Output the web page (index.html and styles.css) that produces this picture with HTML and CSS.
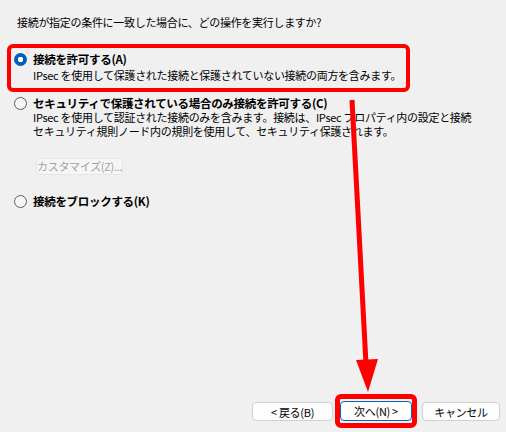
FILE: index.html
```html
<!DOCTYPE html>
<html lang="ja">
<head>
    <meta charset="UTF-8">
    <title>接続の操作</title>
    <link rel="stylesheet" href="styles.css">
</head>
<body>
    <div class="page">
        <div class="question">接続が指定の条件に一致した場合に、どの操作を実行しますか?</div>

        <div class="choice mark">
            <div class="choice-head">
                <span class="radio checked"></span>
                <span class="label">接続を許可する(A)</span>
            </div>
            <div class="desc">IPsec を使用して保護された接続と保護されていない接続の両方を含みます。</div>
        </div>

        <div class="choice second">
            <div class="choice-head short">
                <span class="radio"></span>
                <span class="label">セキュリティで保護されている場合のみ接続を許可する(C)</span>
            </div>
            <div class="desc tight">IPsec を使用して認証された接続のみを含みます。接続は、IPsec プロパティ内の設定と接続<br>セキュリティ規則ノード内の規則を使用して、セキュリティ保護されます。</div>
        </div>

        <button class="btn customize" disabled>カスタマイズ(Z)...</button>

        <div class="choice third">
            <div class="choice-head">
                <span class="radio"></span>
                <span class="label">接続をブロックする(K)</span>
            </div>
        </div>

        <div class="actions">
            <button class="btn back">&lt; 戻る(B)</button>
            <div class="mark-btn">
                <button class="btn next">次へ(N) &gt;</button>
            </div>
            <button class="btn cancel">キャンセル</button>
        </div>

        <svg class="arrow" width="506" height="432" viewBox="0 0 506 432">
            <line x1="352" y1="100" x2="366" y2="364" stroke="#ff0000" stroke-width="5" />
            <polygon points="356,360 378,359 368,392" fill="#ff0000" />
        </svg>
    </div>
</body>
</html>
```

FILE: styles.css
```css
body {
    margin: 0;
    padding: 0;
    background: #f0f0f0;
    font-family: "Noto Sans CJK JP", "Noto Sans", sans-serif;
    font-size: 11px;
    letter-spacing: -0.3px;
    color: #000;
    white-space: nowrap;
}

.page {
    position: relative;
    width: 506px;
    height: 432px;
    display: flex;
    flex-direction: column;
    box-sizing: border-box;
    padding-bottom: 4px;
    overflow: hidden;
}

.question {
    padding: 14px 0 0 17px;
    line-height: 16px;
}

.choice-head {
    display: flex;
    align-items: center;
    line-height: 16px;
}

.choice-head.short {
    line-height: 14px;
    margin-top: 1px;
}

.label {
    font-weight: 700;
    font-size: 11.5px;
    margin-left: 6px;
}

.desc {
    line-height: 16px;
    padding-left: 19px;
}

.desc.tight {
    line-height: 14px;
}

.choice.mark {
    margin: 14px 0 0 7px;
    width: 403px;
    height: 48px;
    box-sizing: border-box;
    border: 4px solid #ff0000;
    border-radius: 6px;
    padding: 3px 0 0 3px;
}

.choice.second {
    margin: 3px 0 0 14px;
}

.choice.third {
    margin: 18px 0 0 14px;
}

.radio {
    width: 13px;
    height: 13px;
    box-sizing: border-box;
    border-radius: 50%;
    border: 1px solid #5d5d5d;
    background: #f6f6f6;
    flex: none;
}

.radio.checked {
    border: none;
    background: radial-gradient(circle, #ffffff 0 2.5px, #005fb8 3px);
}

.btn {
    font-family: inherit;
    font-size: 11px;
    letter-spacing: -0.3px;
    white-space: nowrap;
    height: 20px;
    padding: 0;
    background: #fdfdfd;
    border: 1px solid #d0d0d0;
    border-radius: 4px;
    color: #000;
    line-height: 18px;
}

.customize {
    margin: 20px 0 0 36px;
    width: 87px;
    height: 17px;
    line-height: 15px;
    background: #f6f6f6;
    border-color: #e5e5e5;
    color: #a0a0a0;
}

.actions {
    margin-top: auto;
    display: flex;
    align-items: center;
    justify-content: flex-end;
    padding-right: 6px;
}

.back {
    width: 81px;
    height: 19px;
    margin-right: 2px;
}

.mark-btn {
    border: 5px solid #ff0000;
    border-radius: 6px;
    padding: 2px 0;
}

.next {
    display: block;
    width: 72px;
    border-color: #0067c0;
}

.cancel {
    width: 78px;
    height: 19px;
    margin-left: 5px;
}

.arrow {
    position: absolute;
    top: 0;
    left: 0;
    pointer-events: none;
}
```
